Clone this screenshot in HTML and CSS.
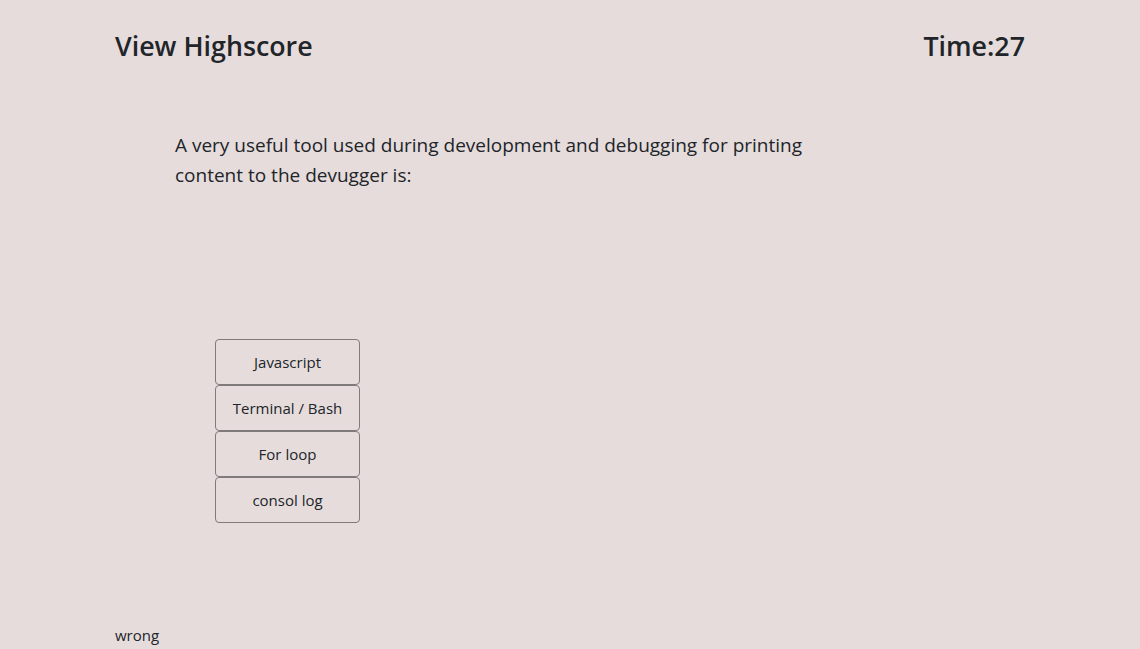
FILE: index.html
```html
<!DOCTYPE html>
<html>
<head>
<meta charset="utf-8">
<link rel="stylesheet" href="styles.css">
</head>
<body>
<div class="page">
  <header class="top">
    <a class="highscore">View Highscore</a>
    <div class="timer">Time:27</div>
  </header>
  <main class="quiz">
    <p class="question">A very useful tool used during development and debugging for printing content to the devugger is:</p>
    <div class="answers">
      <button class="answer">Javascript</button>
      <button class="answer">Terminal / Bash</button>
      <button class="answer">For loop</button>
      <button class="answer">consol log</button>
    </div>
  </main>
  <div class="result">wrong</div>
</div>
</body>
</html>
```
FILE: styles.css
```css
html, body {
  margin: 0;
  padding: 0;
  height: 100%;
}
body {
  background: #e6dcdc;
  color: #212529;
  font-family: "Open Sans", "Noto Sans", sans-serif;
}
.page {
  padding: 0 115px;
  height: 649px;
  display: flex;
  flex-direction: column;
  box-sizing: border-box;
}
.top {
  display: flex;
  justify-content: space-between;
  align-items: center;
  padding-top: 28px;
  height: 36px;
}
.highscore, .timer {
  font-size: 26.8px;
  font-weight: 600;
  line-height: 36px;
}
.quiz {
  padding-left: 60px;
}
.question {
  margin: 66px 0 0 0;
  font-size: 19px;
  line-height: 30px;
  max-width: 650px;
}
.answers {
  margin: 149px 0 0 40px;
  display: flex;
  flex-direction: column;
  width: 145px;
}
.answer {
  height: 46px;
  background: transparent;
  border: 1px solid #7f7b7b;
  border-radius: 4px;
  font-family: inherit;
  font-size: 15px;
  color: #212529;
  padding: 0;
}
.result {
  margin-top: auto;
  font-size: 15px;
  line-height: 20px;
  padding-bottom: 4px;
}
```
